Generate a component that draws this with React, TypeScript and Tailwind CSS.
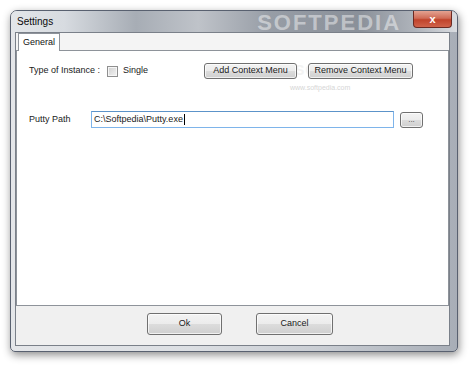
import React from "react";

const btn =
  "flex items-center justify-center border border-[#707070] rounded-[3px] bg-[linear-gradient(#f3f3f3_0%,#ececec_48%,#dcdcdc_52%,#cfcfcf_100%)] text-[#1a1a1a] shadow-[inset_0_0_0_1px_rgba(255,255,255,0.7)]";

export default function App() {
  return (
    <div
      className="w-[474px] h-[368px] bg-white pt-[10px] pl-[10px] overflow-hidden"
      style={{ fontFamily: '"Liberation Sans", Arial, sans-serif' }}
    >
      <div className="relative w-[448px] h-[342px] rounded-t-[7px] rounded-b-[5px] border border-[#596170] bg-[linear-gradient(90deg,#e4e6e9_0%,#dcdfe3_40%,#c9cdd3_70%,#a8aeb7_100%)] shadow-[1px_3px_8px_rgba(0,0,0,0.45)] flex flex-col overflow-hidden">
        {/* title bar */}
        <div className="relative h-[21px] flex items-start bg-[linear-gradient(90deg,#e3e6e9_0%,#d7dbe0_12%,#a7adb5_28%,#bfc3c9_42%,#979da6_58%,#8a9099_78%,#b0b5bc_91%,#dadde1_100%)]">
          <span className="ml-[6px] mt-[5px] text-[10px] leading-[12px] text-[#0a0a0a]">Settings</span>
          <span className="ml-[204px] mt-[1px] text-[22px] leading-[22px] font-bold tracking-[2px] text-white/45">
            SOFTPEDIA
          </span>
          <div className="ml-auto mr-[5px] w-[39px] h-[17px] rounded-b-[4px] border border-t-0 border-[#6b2a22] bg-[linear-gradient(#e4a392_0%,#d06c57_45%,#c0432b_55%,#d0624a_100%)] flex items-center justify-center">
            <span className="text-[11px] leading-[11px] font-bold text-white">x</span>
          </div>
        </div>
        {/* client */}
        <div className="ml-[4px] mr-[7px] h-[314px] border border-[#7a8089] bg-[#f0f0f0] flex flex-col">
          {/* tab strip */}
          <div className="h-[18px] pl-[2px] flex items-end bg-[#f4f4f4]">
            <div className="relative z-10 w-[42px] h-[18px] border border-b-0 border-[#8e939a] bg-white flex items-center justify-center text-[9px] text-[#111]">
              General
            </div>
          </div>
          {/* panel */}
          <div className="relative h-[256px] -mt-[1px] border border-[#8e939a] bg-white pl-[12px] pt-[12px] text-[9px] text-[#1a1a1a]">
            <div className="absolute left-[278px] top-[9px] text-[14px] font-bold tracking-[1px] text-[#f3f3f3]">
              SOFTPEDIA
            </div>
            <div className="absolute left-[273px] top-[32px] text-[7px] text-[#d6d6d6]">www.softpedia.com</div>
            <div className="relative flex items-center h-[16px]">
              <div className="w-[175px] flex items-center">
                <span className="w-[78px]">Type of Instance :</span>
                <span className="w-[11px] h-[11px] border border-[#8f8f8f] bg-[linear-gradient(135deg,#cfcfcf,#f4f4f4)] shadow-[inset_0_0_0_1px_#f6f6f6]" />
                <span className="ml-[5px]">Single</span>
              </div>
              <div className={`${btn} w-[93px] h-[16px]`}>Add Context Menu</div>
              <div className={`${btn} ml-[11px] w-[105px] h-[16px]`}>Remove Context Menu</div>
            </div>
            <div className="relative flex items-center h-[17px] mt-[32px]">
              <span className="w-[62px]">Putty Path</span>
              <div className="w-[303px] h-[17px] border border-[#7eb4ea] border-t-[#5c93c9] bg-white flex items-center pl-[2px]">
                <span>C:\Softpedia\Putty.exe</span>
                <span className="ml-[1px] w-[1px] h-[11px] bg-black" />
              </div>
              <div className={`${btn} ml-[6px] w-[23px] h-[16px] text-[8px] text-[#444]`}>...</div>
            </div>
          </div>
          {/* bottom buttons */}
          <div className="flex-1 flex items-start pt-[7px] pl-[131px] text-[9px]">
            <div className={`${btn} w-[75px] h-[22px]`}>Ok</div>
            <div className={`${btn} ml-[34px] w-[77px] h-[22px]`}>Cancel</div>
          </div>
        </div>
      </div>
    </div>
  );
}
